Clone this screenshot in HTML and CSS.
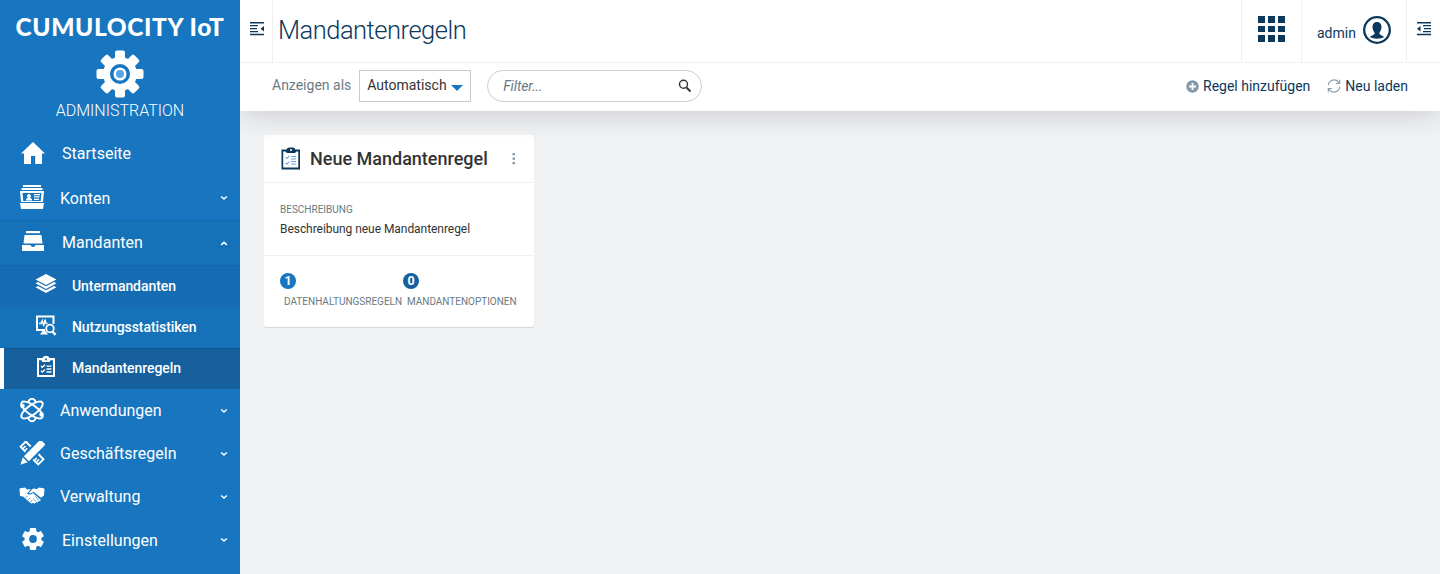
FILE: index.html
```html
<!DOCTYPE html>
<html lang="de">
<head>
<meta charset="utf-8">
<title>Mandantenregeln</title>
<link rel="stylesheet" href="styles.css">
</head>
<body>
<div class="app">
  <nav class="sidebar">
    <div class="brand">
      <div class="brand-name">CUMULOCITY IoT</div>
      <svg class="brand-gear" width="48" height="48" viewBox="-24 -24 48 48">
        <g fill="#fff">
          <circle r="17"/>
          <rect x="-5" y="-23.5" width="10" height="47" rx="2"/><rect x="-23.5" y="-5" width="47" height="10" rx="2"/>
          <g transform="rotate(45)"><rect x="-5" y="-23.5" width="10" height="47" rx="2"/><rect x="-23.5" y="-5" width="47" height="10" rx="2"/></g>
        </g>
        <circle r="8.300" fill="#fff" stroke="#1776bf" stroke-width="3.500"/>
        <circle r="4" fill="#58a6ea"/>
      </svg>
      <div class="brand-app">ADMINISTRATION</div>
    </div>

    <a class="item single first"><svg class="ico" width="26" height="26" viewBox="0 0 26 26"><path fill="#fff" d="M13 1 25 12.500H22V23H15.200V15H11V23H4V12.500H1Z"/></svg><span>Startseite</span></a>
    <a class="item"><svg class="ico" width="26" height="26" viewBox="0 0 26 26"><path fill="#fff" d="M4 0H22V2H4ZM2.500 3H23.500V5H2.500ZM1 6H25L24 17H2ZM3.500 8 4.300 16H21.700L22.500 8ZM1 18H25L24 24H2Z" fill-rule="evenodd"/><path fill="#fff" d="M10 9a2 2 0 0 1 1 3.700l2 1.300V15.500H7V14l2-1.300a2 2 0 0 1 1-3.700ZM15 9h6v1.200h-6ZM15 11.300h5.500v1.200H15ZM15 13.700h5v1.200h-5Z"/></svg><span>Konten</span><svg class="chev" width="8" height="8" viewBox="0 0 8 8"><path d="M1.200 2.500 4 5 6.800 2.500"/></svg></a>
    <a class="item single open"><svg class="ico" width="26" height="26" viewBox="0 0 26 26"><path fill="#fff" d="M6 1H20V3.300H6ZM4.500 5H21.500L22.500 13.500H3.500ZM2 15H10.500Q11 17 13 17T15.500 15H24V21H2Z"/></svg><span>Mandanten</span><svg class="chev" width="8" height="8" viewBox="0 0 8 8"><path d="M1.200 5.800 4 3.300 6.800 5.800"/></svg></a>

    <div class="sub">
      <a class="subitem dim"><svg width="24" height="24" viewBox="0 0 24 24"><path fill="#fff" d="M12 2 22.500 7.500 12 13 1.500 7.500ZM1.500 11.200 4 10 12 14.200 20 10 22.500 11.200 12 17ZM1.500 15.200 4 14 12 18.200 20 14 22.500 15.200 12 21Z"/></svg><span>Untermandanten</span></a>
      <a class="subitem"><svg width="24" height="24" viewBox="0 0 24 24" fill="none" stroke="#fff"><path stroke-width="2" d="M11 16H3V2.500H19.500V10"/><path stroke-width="1.300" d="M5 9.500H7L8.200 6.500 9.700 12 11 5.500 12 9.500H13.500"/><circle cx="16" cy="14.500" r="3.800" stroke-width="1.800"/><path stroke-width="2.500" d="M18.500 17.500 21.500 20.800"/><path fill="#fff" stroke="none" d="M8.500 17H12L14 20.500H6Z"/></svg><span>Nutzungsstatistiken</span></a>
      <a class="subitem active"><svg width="24" height="24" viewBox="0 0 24 24"><path fill="#fff" fill-rule="evenodd" d="M3 3H8.500C9 1.200 10.500 1 12 1S15 1.200 15.500 3H21V22H3ZM5 5.200V20H19V5.200H16.500L15.500 7H8.500L7.500 5.200ZM11 3.800H13V5.200H11Z"/><path fill="none" stroke="#fff" stroke-width="1.300" d="M7 11 8.300 12.300 11 9.700M7 15.800 8.300 17 11 14.500M12.500 11.200H17.500M12.500 14H17.500M12.500 17H17.500"/></svg><span>Mandantenregeln</span></a>
    </div>

    <a class="item tight"><svg class="ico" width="26" height="26" viewBox="-13 -12 26 26" fill="none" stroke="#fff" stroke-width="1.900"><ellipse rx="4.800" ry="12.800" transform="rotate(54)"/><ellipse rx="4.800" ry="12.800" transform="rotate(-54)"/><path d="M-4-7.500C-3-10.500-1-11.300 0-11.300S3-10.500 4-7.500M-4 7.500C-3 10.500-1 11.300 0 11.300S3 10.500 4 7.500"/><circle cx="9.500" cy="4.500" r="1.300" fill="#fff"/><circle cx="-9.500" cy="-4" r="1.300" fill="#fff"/></svg><span>Anwendungen</span><svg class="chev" width="8" height="8" viewBox="0 0 8 8"><path d="M1.200 2.500 4 5 6.800 2.500"/></svg></a>
    <a class="item tight"><svg class="ico" width="26" height="26" viewBox="0 0 26 26"><g transform="translate(0 -1) rotate(-45 13 13)"><path fill="none" stroke="#fff" stroke-width="1.900" d="M9.300 7.500V.500H16.700V7.500M9.300 18.500V25.500H16.700V18.500"/><path stroke="#fff" stroke-width="1.500" d="M10 3.500H13.500M10 6.300H13M10 19.800H13M10 22.500H13.500"/></g><g transform="translate(0 -1) rotate(45 13 13)"><path fill="#fff" d="M9.500-2.500H16.500V21H9.500ZM9.500 22.500H16.500L13 29.500Z"/></g></svg><span>Geschäftsregeln</span><svg class="chev" width="8" height="8" viewBox="0 0 8 8"><path d="M1.200 2.500 4 5 6.800 2.500"/></svg></a>
    <a class="item tight"><svg class="ico" width="26" height="26" viewBox="0 1 26 26"><path fill="#fff" d="M.5 5.500 6 4.500 8 6.500 12 6 8 10.500C10 12.500 12 11.500 14 10L21.500 16.500C22 18 20.500 18.500 19.500 17.500 20 19 18.500 20 17 19 17 20.500 15.500 20.800 14 20L12 20.500 4 13.500 1 13ZM25.500 5.500 20 4.500 18 6 14 5.600 9.800 10C11 11 12.500 10 14.500 8.700L22 14.800 25 12.500Z"/><path fill="none" stroke="#1776bf" stroke-width=".7" d="M6.500 15 8.500 13M9 17 11 15M11.300 19.300 13.300 17.300M14 15.500 17 18.500M16.500 13.500 19.500 17"/></svg><span>Verwaltung</span><svg class="chev" width="8" height="8" viewBox="0 0 8 8"><path d="M1.200 2.500 4 5 6.800 2.500"/></svg></a>
    <a class="item single"><svg class="ico" width="26" height="26" viewBox="-13 -12 26 26"><g fill="#fff"><rect x="-3.200" y="-11" width="6.400" height="22" rx="1"/><rect x="-3.200" y="-11" width="6.400" height="22" rx="1" transform="rotate(60)"/><rect x="-3.200" y="-11" width="6.400" height="22" rx="1" transform="rotate(120)"/><circle r="8.500"/></g><circle r="3.900" fill="#1776bf"/></svg><span>Einstellungen</span><svg class="chev" width="8" height="8" viewBox="0 0 8 8"><path d="M1.200 2.500 4 5 6.800 2.500"/></svg></a>
  </nav>

  <main class="main">
    <header class="header">
      <div class="toggle left"><svg width="16" height="16" viewBox="0 0 16 16"><path fill="#0b385b" d="M1 1H15V2.500H1ZM1 4H9V5.300H1ZM1 7H8V8.300H1ZM1 10H9V11.300H1ZM1 12.700H15V14.200H1ZM15 5V10.500L11.500 7.700Z"/></svg></div>
      <h1 class="title">Mandantenregeln</h1>
      <div class="cell apps"><svg width="27" height="26" viewBox="0 0 27 26"><path fill="#0b385b" d="M0 0H7V7H0ZM10 0H17V7H10ZM20 0H27V7H20ZM0 10H7V16H0ZM10 10H17V16H10ZM20 10H27V16H20ZM0 19H7V26H0ZM10 19H17V26H10ZM20 19H27V26H20Z"/></svg></div>
      <div class="cell user"><span>admin</span><svg width="28" height="28" viewBox="0 0 28 28"><circle cx="14" cy="14" r="12.800" fill="none" stroke="#0b385b" stroke-width="2.300"/><path fill="#0b385b" d="M14 6C17 6 18.600 8 18.500 11 18.400 14 17.200 15.500 16.300 17 16.300 19 19 19 21 21 18 23.200 10 23.200 7 21 9 19 11.700 19 11.700 17 10.800 15.500 9.600 14 9.500 11 9.400 8 11 6 14 6Z"/></svg></div>
      <div class="cell toggle right"><svg width="16" height="16" viewBox="0 0 16 16"><path fill="#0b385b" d="M1 1H15V2.500H1ZM7 4H15V5.300H7ZM8 7H15V8.300H8ZM7 10H15V11.300H7ZM1 12.700H15V14.200H1ZM1 7.700 4.500 5V10.500Z"/></svg></div>
    </header>
    <div class="toolbar">
      <span class="label">Anzeigen als</span>
      <div class="select"><span>Automatisch</span><svg width="12" height="6" viewBox="0 0 12 6"><path fill="#1776bf" d="M0 0H12L6 6Z"/></svg></div>
      <div class="search"><span>Filter...</span><svg width="14" height="14" viewBox="0 0 14 14" fill="none" stroke="#333"><circle cx="5.500" cy="5.300" r="4" stroke-width="1.400"/><path stroke-width="2" d="M8.500 8.500 12.500 12.500"/></svg></div>
      <div class="actions">
        <a class="action add"><svg width="13" height="13" viewBox="0 0 13 13"><circle cx="6.500" cy="6.500" r="6.200" fill="#8498a9"/><path stroke="#fff" stroke-width="1.800" d="M6.500 3V10M3 6.500H10"/></svg><span>Regel hinzufügen</span></a>
        <a class="action"><svg width="14" height="14" viewBox="0 0 14 14" fill="none" stroke="#90a2b1" stroke-width="1.200"><path d="M1.300 6.200A5.700 5.700 0 0 1 12 4M12.700 7.800A5.700 5.700 0 0 1 2 10M12.700.8V4.500H9M1.300 13.200V9.500H5"/></svg><span>Neu laden</span></a>
      </div>
    </div>
    <section class="content">
      <article class="card">
        <div class="card-head">
          <svg width="20" height="24" viewBox="0 0 20 24"><path fill="#0b385b" fill-rule="evenodd" d="M.500 2.500H5.500C6 .8 8 .5 10 .5S14 .8 14.500 2.500H19V22.500H.500ZM2.200 4.500V20.500H17.300V4.500H15.500L14 6H6L4.500 4.500ZM9 2.200H11V3.800H9Z"/><path fill="none" stroke="#6aa8ee" stroke-width="1.100" d="M4.500 10.300 5.800 11.500 8.300 9M4.500 16 5.800 17.200 8.300 14.700M10 9.500H15M10 12H15M10 14.500H15M10 17H15"/></svg>
          <h2>Neue Mandantenregel</h2>
          <svg class="dots" width="4" height="12" viewBox="0 0 4 12"><path fill="#8498a9" d="M.500 0H3V2.300H.500ZM.500 4.500H3V6.800H.500ZM.500 9H3V11.300H.500Z"/></svg>
        </div>
        <div class="card-desc">
          <div class="caption">BESCHREIBUNG</div>
          <p>Beschreibung neue Mandantenregel</p>
        </div>
        <div class="card-stats">
          <div class="stat one"><b class="badge">1</b><div class="caption">DATENHALTUNGSREGELN</div></div>
          <div class="stat two"><b class="badge dark">0</b><div class="caption">MANDANTENOPTIONEN</div></div>
        </div>
      </article>
    </section>
  </main>
</div>
</body>
</html>
```

FILE: styles.css
```css
* { box-sizing: border-box; }
body { margin: 0; font-family: Roboto, "Liberation Sans", sans-serif; font-size: 14px; color: #333; }
svg { display: block; flex: none; }
.app { display: flex; width: 1440px; height: 574px; overflow: hidden; background: #f1f2f4; }

.sidebar { width: 240px; height: 574px; background: #1776bf; color: #fff; flex: none; }
.brand { height: 131px; padding-top: 12px; display: flex; flex-direction: column; align-items: center; white-space: nowrap; }
.brand-name { font: 900 24.5px/30px Lato, sans-serif; letter-spacing: .6px; }
.brand-gear { margin-top: 8px; }
.brand-app { font-size: 16px; line-height: 20px; margin-top: 3px; font-weight: 300; }
.item { display: flex; align-items: center; height: 44px; padding: 0 12px 0 19px; font-size: 16px; }
.item .ico { margin-right: 15px; }
.item.single .ico { margin: 0 16px 0 1px; }
.item.single span { letter-spacing: .03px; }
.item.first { height: 45px; }
.item.tight { height: 43px; }
.item.open { height: 45px; padding-bottom: 1px; background: #1672b8; border-top: 1px solid #146bad; }
.chev { margin-left: auto; fill: none; stroke: #fff; stroke-width: 1.6; }
.sub { background: #1672b8; }
.subitem { display: flex; align-items: center; height: 41px; padding: 0 0 1px 34px; font-size: 14px; font-weight: 500; letter-spacing: -.06px; }
.subitem svg { margin: -3px 14px 0 0; }
.subitem.dim { height: 42px; padding-bottom: 2px; background: #166cb2; border-top: 1px solid #1468aa; }
.subitem.active { background: #15609d; border-left: 4px solid #fff; padding-left: 30px; box-shadow: inset 0 1px #10558b; }

.main { flex: 1; min-width: 0; display: flex; flex-direction: column; }
.header { display: flex; height: 63px; background: #fff; border-bottom: 1px solid #eff0f2; color: #0b385b; }
.toggle { display: flex; justify-content: center; padding-top: 21px; }
.toggle.left { width: 33px; padding-left: 2px; border-right: 1px solid #eff0f2; }
.title { flex: 1; margin: 0; padding-left: 5px; font-size: 25.5px; line-height: 60px; font-weight: 300; letter-spacing: -.5px; }
.cell { border-left: 1px solid #eff0f2; }
.apps { width: 60px; padding: 16px 0 0 16px; }
.user { width: 105px; display: flex; padding: 16px 0 0 15px; gap: 7px; }
.user span { line-height: 35px; }
.toggle.right { width: 34px; }
.toolbar { display: flex; height: 48px; padding: 0 32px 2px; align-items: center; background: #fff; box-shadow: 0 0 32px rgba(0,0,0,.2); clip-path: inset(0 0 -40px 0); }
.label { color: #6c7a84; margin-top: -2px; }
.select { display: flex; align-items: center; width: 112px; height: 32px; margin-left: 8px; padding: 0 7px 2px; border: 1px solid #c5ccd1; }
.select svg { margin: 5px 0 0 4px; }
.search { display: flex; align-items: center; justify-content: space-between; width: 215px; height: 32px; margin-left: 16px; padding: 0 9px 0 15px; border: 1px solid #c9cfd2; border-radius: 16px; font-style: italic; color: #687a83; letter-spacing: -.15px; }
.actions { display: flex; gap: 17px; margin-left: auto; }
.action { display: flex; align-items: center; gap: 4px; color: #0b385b; }

.content { padding: 24px; }
.card { width: 270px; height: 192px; background: #fff; border-radius: 3px; box-shadow: 0 1px 1px rgba(0,0,0,.12); overflow: hidden; }
.card-head { height: 48px; display: flex; align-items: center; padding: 0 16px 0 17px; border-bottom: 1px solid #eff0f2; }
.card-head h2 { margin: 0 0 0 9px; font-size: 18px; font-weight: 500; white-space: nowrap; }
.dots { margin-left: auto; margin-right: 2px; }
.card-desc { height: 73px; padding: 20px 16px 0; border-bottom: 1px solid #eff0f2; }
.caption { font-size: 10px; line-height: 14px; color: #687a83; white-space: nowrap; }
.card-desc p { margin: 3px 0 0; font-size: 12px; line-height: 18px; letter-spacing: -.05px; }
.card-stats { display: flex; padding: 17px 16px; }
.stat .caption { padding: 6px 0 0 4px; }
.stat.one { width: 123px; }
.stat.two { letter-spacing: -.02px; }
.badge { display: block; width: 16px; height: 16px; border-radius: 8px; background: #1776bf; color: #fff; font-size: 12.5px; line-height: 16px; text-align: center; }
.badge.dark { background: #15609d; }
```
